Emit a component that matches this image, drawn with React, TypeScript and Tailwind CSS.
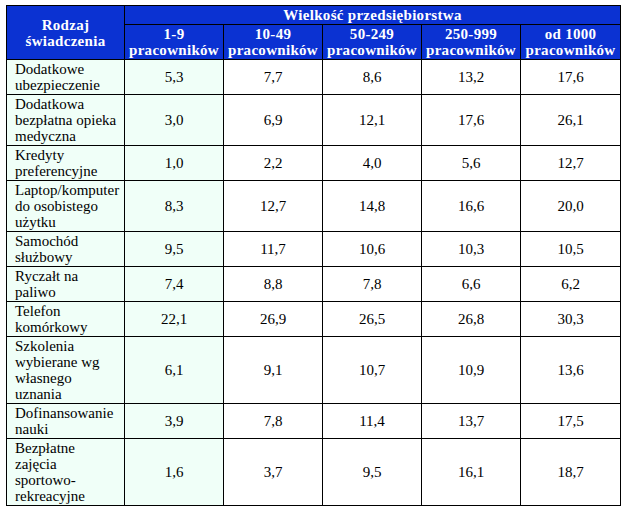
const rows: { label: string[]; values: string[] }[] = [
  { label: ["Dodatkowe", "ubezpieczenie"], values: ["5,3", "7,7", "8,6", "13,2", "17,6"] },
  { label: ["Dodatkowa", "bezpłatna opieka", "medyczna"], values: ["3,0", "6,9", "12,1", "17,6", "26,1"] },
  { label: ["Kredyty", "preferencyjne"], values: ["1,0", "2,2", "4,0", "5,6", "12,7"] },
  { label: ["Laptop/komputer", "do osobistego", "użytku"], values: ["8,3", "12,7", "14,8", "16,6", "20,0"] },
  { label: ["Samochód", "służbowy"], values: ["9,5", "11,7", "10,6", "10,3", "10,5"] },
  { label: ["Ryczałt na", "paliwo"], values: ["7,4", "8,8", "7,8", "6,6", "6,2"] },
  { label: ["Telefon", "komórkowy"], values: ["22,1", "26,9", "26,5", "26,8", "30,3"] },
  { label: ["Szkolenia", "wybierane wg", "własnego", "uznania"], values: ["6,1", "9,1", "10,7", "10,9", "13,6"] },
  { label: ["Dofinansowanie", "nauki"], values: ["3,9", "7,8", "11,4", "13,7", "17,5"] },
  { label: ["Bezpłatne", "zajęcia", "sportowo-", "rekreacyjne"], values: ["1,6", "3,7", "9,5", "16,1", "18,7"] },
];

const sizes = [
  ["1-9", "pracowników"],
  ["10-49", "pracowników"],
  ["50-249", "pracowników"],
  ["250-999", "pracowników"],
  ["od 1000", "pracowników"],
];

const App = () => {
  return (
    <div className="min-h-screen bg-white pt-[5px] pl-[6px] text-black">
      <table className="w-[614px] table-fixed border-collapse border border-black font-[Liberation_Serif,serif] text-[15px] leading-[16px]">
        <colgroup>
          <col className="w-[118px]" />
          <col className="w-[99px]" />
          <col className="w-[99px]" />
          <col className="w-[99px]" />
          <col className="w-[99px]" />
          <col className="w-[100px]" />
        </colgroup>
        <thead>
          <tr className="bg-[#0b32d2] text-white font-bold tracking-[0.3px]">
            <th rowSpan={2} className="border border-black py-px text-center align-middle">
              Rodzaj
              <br />
              świadczenia
            </th>
            <th colSpan={5} className="border border-black py-px text-center">
              Wielkość przedsiębiorstwa
            </th>
          </tr>
          <tr className="bg-[#0b32d2] text-white font-bold tracking-[0.3px]">
            {sizes.map((s) => (
              <th key={s[0]} className="border border-black py-px text-center">
                {s[0]}
                <br />
                {s[1]}
              </th>
            ))}
          </tr>
        </thead>
        <tbody>
          {rows.map((row) => (
            <tr key={row.label.join(" ")}>
              <td className="border border-black bg-[#f0fff8] py-px pl-[8px] text-left align-middle">
                {row.label.map((line, i) => (
                  <div key={i}>{line}</div>
                ))}
              </td>
              {row.values.map((v, i) => (
                <td
                  key={i}
                  className={
                    i === 0
                      ? "border border-black bg-[#f0fff8] py-px text-center align-middle"
                      : "border border-black bg-white py-px text-center align-middle"
                  }
                >
                  {v}
                </td>
              ))}
            </tr>
          ))}
        </tbody>
      </table>
    </div>
  );
};

export default App;
